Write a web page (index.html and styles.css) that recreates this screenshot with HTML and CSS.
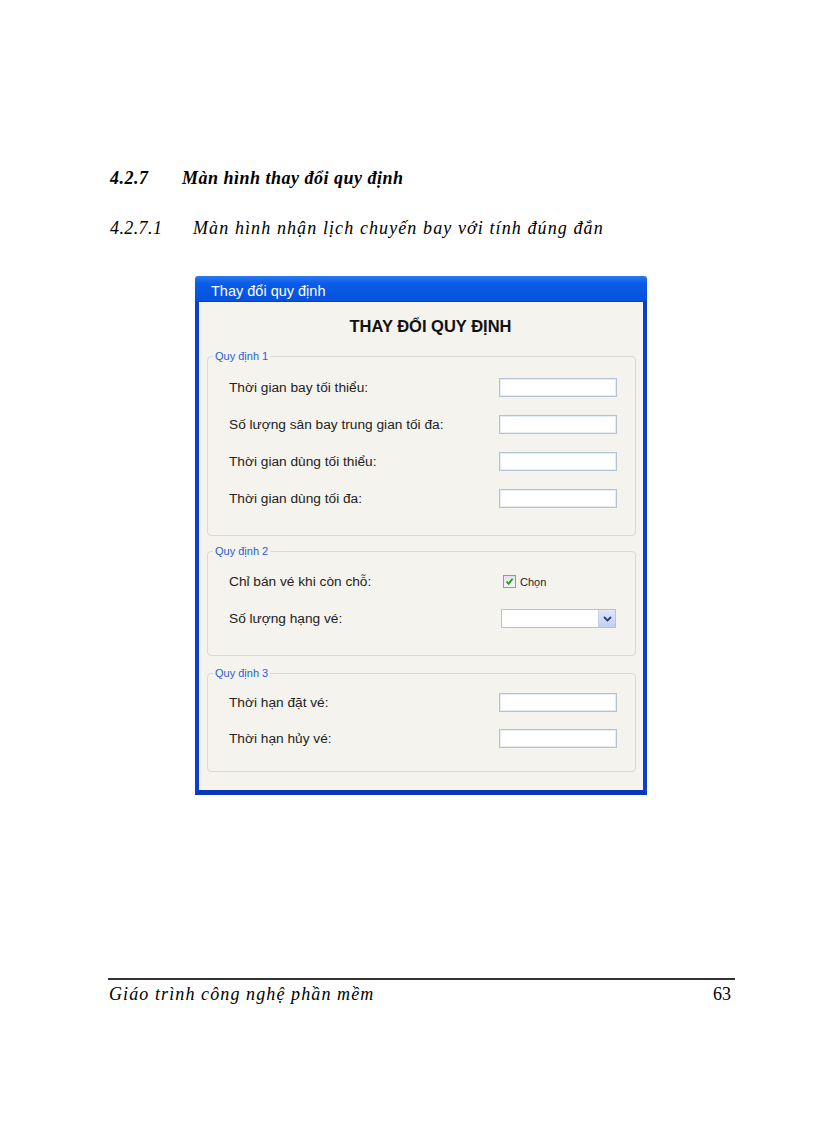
FILE: index.html
```html
<!DOCTYPE html>
<html lang="vi">
<head>
<meta charset="utf-8">
<title>Màn hình thay đổi quy định</title>
<link rel="stylesheet" href="styles.css">
</head>
<body>
<div class="page">
  <h3 class="h-sec"><span class="num num-a">4.2.7</span><span class="htext">Màn hình thay đổi quy định</span></h3>
  <h4 class="h-sub"><span class="num num-b">4.2.7.1</span><span class="htext">Màn hình nhận lịch chuyến bay với tính đúng đắn</span></h4>

  <div class="window">
    <div class="titlebar">Thay đổi quy định</div>
    <div class="frame">
      <div class="form-title">THAY ĐỔI QUY ĐỊNH</div>

      <fieldset class="group g1">
        <legend>Quy định 1</legend>
        <div class="row"><span class="label">Thời gian bay tối thiểu:</span><span class="input"></span></div>
        <div class="row"><span class="label">Số lượng sân bay trung gian tối đa:</span><span class="input"></span></div>
        <div class="row"><span class="label">Thời gian dùng tối thiểu:</span><span class="input"></span></div>
        <div class="row"><span class="label">Thời gian dùng tối đa:</span><span class="input"></span></div>
      </fieldset>

      <fieldset class="group g2">
        <legend>Quy định 2</legend>
        <div class="row"><span class="label">Chỉ bán vé khi còn chỗ:</span>
          <span class="check-wrap"><span class="checkbox"><svg width="9" height="9" viewBox="0 0 9 9"><path d="M1.5 4.5 L3.6 6.8 L7.6 1.8" fill="none" stroke="#2a9a1e" stroke-width="1.8"/></svg></span><span class="check-text">Chọn</span></span>
        </div>
        <div class="row"><span class="label">Số lượng hạng vé:</span>
          <span class="select"><span class="select-btn"><svg width="9" height="6" viewBox="0 0 9 6"><path d="M1 1 L4.5 4.5 L8 1" fill="none" stroke="#2a3f7a" stroke-width="1.8"/></svg></span></span>
        </div>
      </fieldset>

      <fieldset class="group g3">
        <legend>Quy định 3</legend>
        <div class="row r36"><span class="label">Thời hạn đặt vé:</span><span class="input"></span></div>
        <div class="row r36"><span class="label">Thời hạn hủy vé:</span><span class="input"></span></div>
      </fieldset>
    </div>
  </div>

  <div class="footer">
    <span class="ftext">Giáo trình công nghệ phần mềm</span>
    <span>63</span>
  </div>
</div>
</body>
</html>
```

FILE: styles.css
```css
html, body {
  margin: 0;
  padding: 0;
  background: #ffffff;
}

.page {
  width: 816px;
  height: 1123px;
  box-sizing: border-box;
  padding: 0 81px 0 108px;
  display: flex;
  flex-direction: column;
  font-family: "Liberation Serif", "Times New Roman", serif;
  color: #000;
}

.h-sec {
  margin: 168px 0 0 2px;
  font-size: 18px;
  line-height: 20px;
  font-weight: bold;
  font-style: italic;
  letter-spacing: 0.5px;
  display: flex;
}

.h-sub {
  margin: 28px 0 0 2px;
  font-size: 18px;
  line-height: 24px;
  font-weight: normal;
  font-style: italic;
  display: flex;
}

.h-sub .num { letter-spacing: 0.4px; }
.h-sub .htext { letter-spacing: 1.1px; }

.num { display: inline-block; }
.num-a { width: 72px; }
.num-b { width: 83px; }

.window {
  margin: 36px 0 0 87px;
  width: 452px;
  font-family: "Liberation Sans", Arial, sans-serif;
}

.titlebar {
  height: 26px;
  box-sizing: border-box;
  padding: 3px 0 0 16px;
  line-height: 24px;
  font-size: 14.5px;
  color: #ffffff;
  background: linear-gradient(#2a78f2 0%, #0a5ce8 30%, #0654e0 80%, #0a4fd8 100%);
  border-radius: 3px 3px 0 0;
  border-bottom: 1px solid #0a3fc4;
  overflow: hidden;
}

.frame {
  border: 4px solid #0b3fd2;
  border-top: 0;
  border-bottom: 5px solid #0a36bb;
  background: #f4f3ee;
  padding: 0 7px 18px 8px;
}

.form-title {
  text-align: center;
  font-weight: bold;
  font-size: 16.5px;
  line-height: 20px;
  padding: 14px 0 0 18px;
  margin-bottom: 14px;
  color: #111;
}

.group {
  margin: 0;
  border: 1px solid #dcdad0;
  border-radius: 4px;
  padding: 0 18px 18px 21px;
}

.group legend {
  font-size: 11px;
  line-height: 12px;
  color: #2c5fd6;
  padding: 0 2px;
  margin-left: -16px;
}

.g1 { padding-top: 7px; }
.g2 { margin-top: 9px; padding-top: 6px; }
.g3 { margin-top: 11px; padding-top: 5px; padding-bottom: 15px; }

.row {
  height: 37px;
  display: flex;
  align-items: center;
  justify-content: space-between;
}
.row.r36 { height: 36px; }

.label {
  font-size: 13.7px;
  color: #222;
}

.input {
  width: 118px;
  height: 19px;
  box-sizing: border-box;
  background: #ffffff;
  border: 1px solid #b4c2d8;
  box-shadow: inset 0 0 0 1px #e6ecf4;
}

.check-wrap {
  width: 114px;
  display: flex;
  align-items: center;
  gap: 4px;
}

.checkbox {
  width: 13px;
  height: 13px;
  box-sizing: border-box;
  border: 1px solid #8a9ab4;
  background: linear-gradient(#dfe4ec, #f4f6f8);
  display: flex;
  align-items: center;
  justify-content: center;
}

.check-text {
  font-size: 11px;
  color: #222;
}

.select {
  width: 115px;
  height: 19px;
  box-sizing: border-box;
  background: #ffffff;
  border: 1px solid #b4c2d8;
  display: flex;
  justify-content: flex-end;
  margin-right: 1px;
}

.select-btn {
  width: 16px;
  height: 100%;
  background: linear-gradient(#dfe6f8, #c2cff0);
  border-left: 1px solid #c8d2ea;
  display: flex;
  align-items: center;
  justify-content: center;
}

.footer {
  margin-top: 183px;
  border-top: 2px solid #333;
  display: flex;
  justify-content: space-between;
  font-style: italic;
  font-size: 18px;
  line-height: 22px;
  padding: 3px 4px 0 1px;
}
.footer .ftext { letter-spacing: 1.1px; }
.footer span:last-child { font-style: normal; }
```
